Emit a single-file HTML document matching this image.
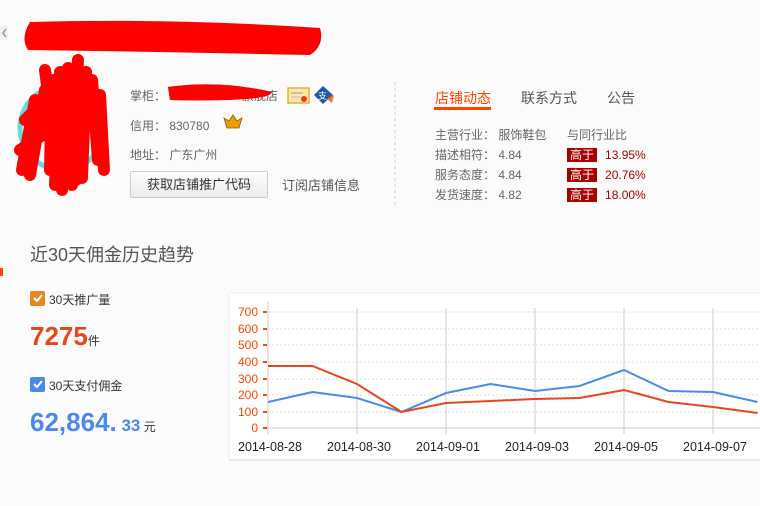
<!DOCTYPE html>
<html><head><meta charset="utf-8"><style>
*{margin:0;padding:0;box-sizing:border-box}
body{width:760px;height:506px;overflow:hidden;background:#fbfbfb;font-family:"Liberation Sans","Noto Sans CJK SC",sans-serif;position:relative;color:#666}
.a{position:absolute;white-space:nowrap}
.f12{font-size:12px}
.tag{background:#a00;color:#fff;padding:0 3px;font-size:12px;line-height:15px}
</style></head><body>
<svg class="a" style="left:0;top:0" width="760" height="506">
<rect x="0" y="26" width="8" height="14" fill="#f0f0f0"/>
<path d="M6 29 L3 33 L6 37" stroke="#999" stroke-width="1.5" fill="none"/>
<path d="M30 22 Q170 18 320 28 Q325 45 310 55 Q170 52 28 50 Q20 38 30 22Z" fill="#f00"/>
<circle cx="62" cy="128" r="42" fill="none" stroke="#6dd" stroke-width="5"/>
<path d="M35 100 L22 170 M45 90 L30 175 M52 80 L50 170 M60 72 L55 185 M68 68 L62 190 M78 60 L72 185 M86 72 L82 178 M92 80 L98 160 M100 95 L104 170 M25 120 L45 100 M20 150 L50 130 M45 70 L60 185 M35 105 L55 150 M88 90 L76 180" stroke="#f00" stroke-width="12" stroke-linecap="round"/>
<path d="M168 87 Q220 80 272 92 Q270 102 170 100Z" fill="#f00"/>
<rect x="288" y="88" width="21" height="15" fill="#fde8a8" stroke="#e8a020" stroke-width="1.3"/>
<line x1="291" y1="93" x2="303" y2="93" stroke="#999"/><line x1="291" y1="97" x2="300" y2="97" stroke="#bbb"/>
<circle cx="304" cy="99" r="3" fill="#e33"/>
<path d="M323 86 L333 95 L323 104 L314 95Z" fill="#1e5aa8"/><path d="M327 99 L334 95 L332 103Z" fill="#e87a20"/>
<text x="318" y="99" font-size="9" fill="#fff" font-family="Noto Sans CJK SC">支</text>
<path d="M224 118 L227 128 L239 128 L242 118 L237 121 L233 115 L229 121Z" fill="#e8a000" stroke="#a05000" stroke-width="0.8"/>
<line x1="395" y1="82" x2="395" y2="205" stroke="#ccc" stroke-dasharray="3,3"/>
<rect x="434" y="107" width="57" height="3" fill="#f40"/>
<rect x="0" y="268" width="3" height="8" fill="#f40"/>
<rect x="30" y="291" width="15" height="15" rx="2" fill="#e8871e"/><path d="M34 298 L37 301 L42 295" stroke="#fff" stroke-width="2" fill="none"/>
<rect x="30" y="377" width="15" height="15" rx="2" fill="#4a8ae8"/><path d="M34 384 L37 387 L42 381" stroke="#fff" stroke-width="2" fill="none"/>
<rect x="229" y="293" width="540" height="167" fill="#fff" stroke="#eee"/>
<rect x="229" y="459" width="540" height="2" fill="#ebebeb"/>
<g stroke="#ddd" stroke-dasharray="2,2">
<line x1="268" x2="760" y1="312" y2="312"/><line x1="268" x2="760" y1="329" y2="329"/><line x1="268" x2="760" y1="345" y2="345"/><line x1="268" x2="760" y1="362" y2="362"/><line x1="268" x2="760" y1="379" y2="379"/><line x1="268" x2="760" y1="395" y2="395"/><line x1="268" x2="760" y1="412" y2="412"/></g>
<g stroke="#ccc"><line x1="357" x2="357" y1="308" y2="428"/><line x1="446" x2="446" y1="308" y2="428"/><line x1="535" x2="535" y1="308" y2="428"/><line x1="624" x2="624" y1="308" y2="428"/><line x1="713" x2="713" y1="308" y2="428"/>
<line x1="268" x2="760" y1="428" y2="428"/><line x1="268" x2="268" y1="302" y2="434"/>
<line x1="357" x2="357" y1="428" y2="434"/><line x1="446" x2="446" y1="428" y2="434"/><line x1="535" x2="535" y1="428" y2="434"/><line x1="624" x2="624" y1="428" y2="434"/><line x1="713" x2="713" y1="428" y2="434"/></g>
<g fill="#f40"><rect x="263" y="311" width="4" height="2"/><rect x="263" y="328" width="4" height="2"/><rect x="263" y="344" width="4" height="2"/><rect x="263" y="361" width="4" height="2"/><rect x="263" y="378" width="4" height="2"/><rect x="263" y="394" width="4" height="2"/><rect x="263" y="411" width="4" height="2"/><rect x="263" y="427" width="4" height="2"/></g>
<g font-size="12" fill="#f40" text-anchor="end" font-family="Liberation Sans"><text x="258" y="316">700</text><text x="258" y="333">600</text><text x="258" y="349">500</text><text x="258" y="366">400</text><text x="258" y="383">300</text><text x="258" y="399">200</text><text x="258" y="416">100</text><text x="258" y="432">0</text></g>
<g font-size="12.5" fill="#222" text-anchor="middle" font-family="Liberation Sans"><text x="270" y="451">2014-08-28</text><text x="359" y="451">2014-08-30</text><text x="448" y="451">2014-09-01</text><text x="537" y="451">2014-09-03</text><text x="626" y="451">2014-09-05</text><text x="715" y="451">2014-09-07</text></g>
<polyline fill="none" stroke="#4a8ae8" stroke-width="2" points="268,402 312.5,392 357,398 401.5,412 446,393 490.5,384 535,391 579.5,386 624,370 668.5,391 713,392 757.5,402"/>
<polyline fill="none" stroke="#e8461a" stroke-width="2" points="268,366 312.5,366 357,384 401.5,412 446,403 490.5,401 535,399 579.5,398 624,390 668.5,402 713,407 757.5,413"/>
</svg>
<div class="a f12" style="left:242px;top:87px">旗舰店</div>
<svg class="a" style="left:160px;top:80px" width="115" height="25"><path d="M8 7 Q60 0 112 12 Q110 22 10 20Z" fill="#f00"/></svg>
<div class="a f12" style="left:130px;top:87px">掌柜：</div>
<div class="a f12" style="left:130px;top:117px">信用： 830780</div>
<div class="a f12" style="left:130px;top:146px">地址： 广东广州</div>
<div class="a" style="left:130px;top:171px;width:138px;height:27px;border:1px solid #ccc;border-radius:2px;background:linear-gradient(#fdfdfd,#ececec);color:#333;font-size:13px;text-align:center;line-height:25px">获取店铺推广代码</div>
<div class="a" style="left:282px;top:175px;font-size:13px;color:#555">订阅店铺信息</div>
<div class="a" style="left:435px;top:88px;font-size:14px;color:#f40">店铺动态</div>
<div class="a" style="left:521px;top:88px;font-size:14px;color:#555">联系方式</div>
<div class="a" style="left:607px;top:88px;font-size:14px;color:#555">公告</div>
<div class="a f12" style="left:435px;top:126px">主营行业： 服饰鞋包</div>
<div class="a f12" style="left:567px;top:126px">与同行业比</div>
<div class="a f12" style="left:435px;top:146px">描述相符： 4.84</div>
<div class="a f12" style="left:435px;top:166px">服务态度： 4.84</div>
<div class="a f12" style="left:435px;top:186px">发货速度： 4.82</div>
<div class="a" style="left:567px;top:146px"><span class="tag">高于</span><span style="color:#a00;font-size:12px;margin-left:8px">13.95%</span></div>
<div class="a" style="left:567px;top:166px"><span class="tag">高于</span><span style="color:#a00;font-size:12px;margin-left:8px">20.76%</span></div>
<div class="a" style="left:567px;top:186px"><span class="tag">高于</span><span style="color:#a00;font-size:12px;margin-left:8px">18.00%</span></div>
<div class="a" style="left:30px;top:241px;font-size:18px;color:#555">近30天佣金历史趋势</div>
<div class="a f12" style="left:49px;top:291px;color:#333">30天推广量</div>
<div class="a" style="left:30px;top:321px;color:#e8461a;font-size:26px;font-weight:bold">7275<span style="font-size:12px;color:#333;font-weight:normal">件</span></div>
<div class="a f12" style="left:49px;top:377px;color:#333">30天支付佣金</div>
<div class="a" style="left:30px;top:407px;color:#4a8ae8;font-size:26px;font-weight:bold">62,864.<span style="font-size:17px"> 33</span><span style="font-size:12px;color:#333;font-weight:normal"> 元</span></div>
</body></html>
